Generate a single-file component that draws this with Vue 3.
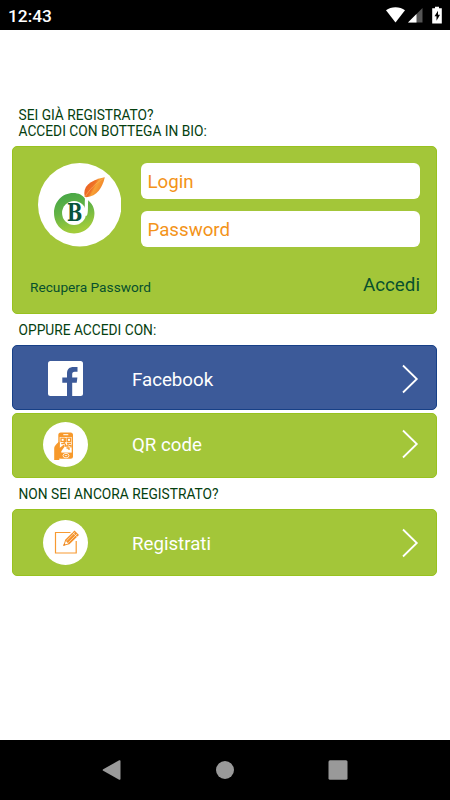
<template>
  <div class="screen">
    <header class="status-bar">
      <span class="clock">12:43</span>
      <svg class="status-icons" viewBox="0 0 60 20" aria-hidden="true">
        <path d="M1 4.2C6 .1 15 .1 20 4.2L10.500 16.400Z" fill="#fff" />
        <path d="M37.500 2V16.500H23Z" fill="#555" />
        <path d="M31.500 8V16.500H23Z" fill="#fff" />
        <path d="M50 .7h4v1.500h2.800V17.500H47.200V2.200H50Z" fill="#fff" />
        <path d="M53 4.800l-3.500 5.500h2v4.500l3.500-6H53Z" fill="#000" />
      </svg>
    </header>

    <main class="content">
      <h2 class="heading">SEI GIÀ REGISTRATO?<br />ACCEDI CON BOTTEGA IN BIO:</h2>

      <form class="login-card" @submit.prevent>
        <div class="login-top">
          <svg class="logo" viewBox="23 24 250 250" aria-hidden="true">
            <defs>
              <linearGradient id="ring" x1="0" y1="0" x2="0.3" y2="1">
                <stop offset="0" stop-color="#42a447" />
                <stop offset="0.5" stop-color="#62b345" />
                <stop offset="1" stop-color="#a2cc3b" />
              </linearGradient>
              <linearGradient id="leaf" x1="0" y1="0.2" x2="1" y2="0.7">
                <stop offset="0" stop-color="#e95a24" />
                <stop offset="0.45" stop-color="#ef7326" />
                <stop offset="0.55" stop-color="#f7a135" />
                <stop offset="1" stop-color="#ee7124" />
              </linearGradient>
            </defs>
            <circle cx="148" cy="149" r="125" fill="#fff" />
            <path
              fill="url(#ring)"
              d="M165 133C157 120 145 114 128 114C96 114 71 140 71 174C71 209 97 235 131 235C166 235 192 208 192 174C192 157 184 145 174 136Z"
            />
            <circle cx="131" cy="174" r="36" fill="#fff" />
            <path d="M164 126C162 143 164 160 163 182L169 182C175 172 171 152 174 130Z" fill="#fff" />
            <path d="M163 126C156 96 176 76 223 67C216 98 198 129 163 126Z" fill="url(#leaf)" />
            <path d="M164 125C176 105 194 86 219 70" fill="none" stroke="#f9b15b" stroke-width="2" />
            <text class="logo-letter" x="110" y="199" textLength="46" lengthAdjust="spacingAndGlyphs">B</text>
          </svg>
          <div class="fields">
            <input v-model="login" type="text" placeholder="Login" />
            <input v-model="password" type="password" placeholder="Password" />
          </div>
        </div>
        <div class="login-actions">
          <button type="button" class="recover">Recupera Password</button>
          <button type="submit" class="submit">Accedi</button>
        </div>
      </form>

      <h2 class="heading">OPPURE ACCEDI CON:</h2>

      <button
        v-for="option in options"
        :key="option.id"
        type="button"
        class="option"
        :class="option.id"
      >
        <span class="option-icon">
          <svg v-if="option.id === 'facebook'" class="fb-icon" viewBox="0 0 35 35">
            <rect width="35" height="35" rx="2.500" fill="#fff" />
            <path
              d="M19 35V21.800H14.300V16.500H19V12.500C19 8 21.600 6 25.500 6H29.500V10.800H26.800C24.700 10.800 24.200 11.800 24.200 13.500V16.500H29.400L28.700 21.800H24.200V35Z"
              fill="#3c5a99"
            />
          </svg>
          <svg v-else viewBox="0 0 45 45">
            <circle cx="22.500" cy="22.500" r="22.500" fill="#fff" />
            <rect x="15.300" y="10.500" width="14.700" height="26.300" rx="2.500" fill="#f7992b" />
            <path d="M20.300 12.700h5" stroke="#fff" stroke-width="1" />
            <rect x="16.700" y="15" width="12" height="15.600" fill="#fff" />
            <g fill="none" stroke="#f7992b" stroke-width="1.300">
              <rect x="18" y="16.200" width="3.300" height="3.300" />
              <rect x="24.300" y="16.200" width="3.300" height="3.300" />
              <path d="M22.700 15.700v4h-1.500v2h-3M24 21.300h4M22.500 21.500v2.500h2.500v-2M26 23.500h2v2M23.500 26h2.500v2" />
            </g>
            <path
              d="M11.200 36.500V26.500C11.200 24.300 12.500 23.500 13.500 22L15.300 20.200C16.500 19.500 17 20.700 16.700 22.200L16.500 26L20 23.200C21.500 22.500 22.300 23.700 21.300 25L18.300 29.200V33L16.300 36.800V38H11.200Z"
              fill="#f7992b"
            />
            <ellipse cx="23" cy="33.600" rx="3" ry="2.200" fill="none" stroke="#fff" stroke-width=".8" />
            <path d="M21.800 33.600h2.400" stroke="#fff" stroke-width=".8" />
          </svg>
        </span>
        <span class="option-label">{{ option.label }}</span>
        <svg class="chevron" viewBox="0 0 18 30"><path d="M2 1.500L15.800 15L2 28.500" /></svg>
      </button>

      <h2 class="heading">NON SEI ANCORA REGISTRATO?</h2>

      <button type="button" class="option register">
        <span class="option-icon">
          <svg viewBox="0 0 45 45">
            <circle cx="22.500" cy="22.500" r="22.500" fill="#fff" />
            <path d="M27.500 12.500H12.500V33H33.200V21" fill="none" stroke="#f79a32" stroke-width="1.200" />
            <path d="M20.300 25.800L22.200 19.700L31.500 10.400L36 14.900L26.400 24.300Z" fill="#f4922a" />
            <path d="M23.400 20.900L32 12.300M25.200 22.700L34 14M29.500 12.400L34 16.900" stroke="#fff" stroke-width=".6" />
            <path d="M21.700 24.500L22.800 20.900L25.300 23.400Z" fill="#fff" />
            <path d="M20.200 25.900L21 23.400L22.700 25.100Z" fill="#e9801c" />
          </svg>
        </span>
        <span class="option-label">Registrati</span>
        <svg class="chevron" viewBox="0 0 18 30"><path d="M2 1.500L15.800 15L2 28.500" /></svg>
      </button>
    </main>

    <nav class="nav-bar">
      <svg viewBox="0 0 20 20"><path d="M1.200 9.200L17.200 .3Q18.500 0 18.500 1V19Q18.500 20 17.200 19.700L1.200 10.800Q0 10 1.200 9.200Z" /></svg>
      <svg viewBox="0 0 20 20"><circle cx="10" cy="10" r="9" /></svg>
      <svg viewBox="0 0 20 20"><rect x=".5" y=".3" width="19" height="19.400" rx="1.500" /></svg>
    </nav>
  </div>
</template>

<script setup>
import { ref } from 'vue'

const login = ref('')
const password = ref('')

const options = [
  { id: 'facebook', label: 'Facebook' },
  { id: 'qr', label: 'QR code' }
]
</script>

<style>
body {
  margin: 0;
  background: #fff;
}
</style>

<style scoped>
.screen {
  display: flex;
  flex-direction: column;
  width: 450px;
  height: 800px;
  overflow: hidden;
  background: #fff;
  font-family: Roboto, sans-serif;
}

.status-bar {
  display: flex;
  align-items: center;
  justify-content: space-between;
  box-sizing: border-box;
  height: 30px;
  padding: 1px 5px 0 8px;
  background: #000;
  color: #fff;
}

.clock {
  font-size: 17.3px;
  font-weight: 500;
  line-height: 30px;
}

.status-icons {
  width: 60px;
  height: 20px;
}

.content {
  display: flex;
  flex: 1;
  flex-direction: column;
  padding: 76.5px 13px 0 12px;
}

.heading {
  margin: 0;
  padding: 0 6.5px 6.5px;
  color: #05400f;
  font-size: 13.75px;
  font-weight: 400;
  line-height: 16.5px;
}

button {
  padding: 0;
  border: none;
  background: none;
  font-family: inherit;
  cursor: pointer;
}

.login-card {
  display: flex;
  flex-direction: column;
  justify-content: space-between;
  box-sizing: border-box;
  height: 168px;
  margin-bottom: 8px;
  padding: 16px 16px 17px 17px;
  border: 1px solid #98c21f;
  border-radius: 5px;
  background: #a3c639;
}

.login-top {
  display: flex;
  gap: 20px;
  padding-left: 7.5px;
}

.logo {
  width: 83.5px;
  height: 83.5px;
}

.logo-letter {
  fill: #08543a;
  font-family: "DejaVu Serif", serif;
  font-size: 70px;
  font-weight: 700;
}

.fields {
  display: flex;
  flex: 1;
  flex-direction: column;
  gap: 12px;
}

input {
  box-sizing: border-box;
  width: 100%;
  height: 36px;
  padding: 1px 6.5px 0;
  border: none;
  border-radius: 6px;
  outline: none;
  background: #fff;
  color: #f39319;
  font-family: inherit;
  font-size: 18.7px;
}

input::placeholder {
  color: #f39319;
  opacity: 1;
}

.login-actions {
  display: flex;
  align-items: flex-end;
  justify-content: space-between;
}

.recover,
.submit {
  color: #07502d;
}

.recover {
  font-size: 13.7px;
  line-height: 18px;
}

.submit {
  font-size: 18.8px;
  line-height: 22px;
}

.option {
  display: flex;
  align-items: center;
  box-sizing: border-box;
  height: 65px;
  padding: 0 17px 0 30px;
  border: 1px solid #98c21f;
  border-radius: 5px;
  background: #a3c639;
  color: #fff;
}

.facebook {
  margin-bottom: 3px;
  padding-top: 2px;
  border-color: #174087;
  background: #3c5a99;
}

.qr {
  margin-bottom: 8px;
  padding-bottom: 3px;
}

.register {
  height: 67px;
}

.option-icon {
  display: flex;
  align-items: center;
  justify-content: center;
  width: 45px;
  height: 45px;
}

.option-icon svg {
  width: 45px;
  height: 45px;
}

.option-icon .fb-icon {
  width: 35px;
  height: 35px;
}

.option-label {
  flex: 1;
  padding: 2px 0 0 44px;
  font-size: 18.7px;
  line-height: 22px;
  text-align: left;
}

.chevron {
  width: 18px;
  height: 30px;
  fill: none;
  stroke: #fff;
  stroke-width: 1.8;
}

.nav-bar {
  display: flex;
  align-items: center;
  justify-content: space-between;
  box-sizing: border-box;
  height: 60px;
  padding: 0 102.5px 0 101.5px;
  background: #000;
}

.nav-bar svg {
  width: 20px;
  height: 20px;
  fill: #999;
}
</style>
